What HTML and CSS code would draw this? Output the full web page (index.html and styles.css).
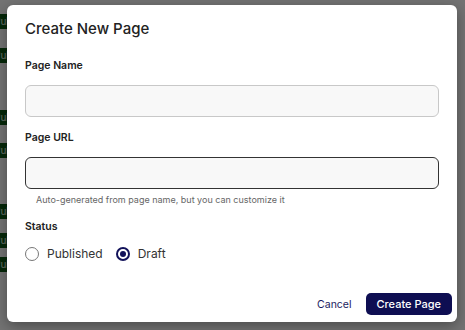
FILE: index.html
```html
<!DOCTYPE html>
<html lang="en">
<head>
    <meta charset="UTF-8">
    <meta name="viewport" content="width=device-width, initial-scale=1.0">
    <title>Create New Page</title>
    <link rel="stylesheet" href="styles.css">
</head>
<body>
    <!-- Page list behind the overlay -->
    <div class="backdrop">
        <span class="badge b1">Published</span>
        <span class="badge b2">Published</span>
        <span class="badge b3">Published</span>
        <span class="badge b4">Published</span>
        <span class="badge b5">Published</span>
        <span class="badge b6">Published</span>
        <span class="badge b7">Published</span>
    </div>
    <div class="overlay">
        <div class="modal">
            <h2 class="modal-title">Create New Page</h2>
            <div class="form-group">
                <label for="pageName">Page Name</label>
                <input type="text" id="pageName" class="field">
            </div>
            <div class="form-group">
                <label for="pageUrl">Page URL</label>
                <input type="text" id="pageUrl" class="field field-focus">
                <p class="hint">Auto-generated from page name, but you can customize it</p>
            </div>
            <div class="form-group">
                <label>Status</label>
                <div class="radios">
                    <span class="radio-option"><span class="radio"></span>Published</span>
                    <span class="radio-option"><span class="radio checked"></span>Draft</span>
                </div>
            </div>
            <div class="actions">
                <button class="btn-cancel">Cancel</button>
                <button class="btn-create">Create Page</button>
            </div>
        </div>
    </div>
</body>
</html>
```

FILE: styles.css
```css
body {
    font-family: Inter, "Noto Sans", sans-serif;
    margin: 0;
    padding: 0;
    width: 465px;
    height: 330px;
    overflow: hidden;
    background-color: #fff;
}
.backdrop {
    position: absolute;
    inset: 0;
}
.badge {
    position: absolute;
    left: -12px;
    height: 15px;
    line-height: 15px;
    padding: 0 6px;
    font-size: 10px;
    color: #e0f5e0;
    background-color: #0d5a16;
}
.b1 { top: 14px; }
.b2 { top: 48px; }
.b3 { top: 110px; }
.b4 { top: 143px; }
.b5 { top: 204px; }
.b6 { top: 233px; }
.b7 { top: 257px; }
.overlay {
    position: absolute;
    inset: 0;
    background-color: rgba(0, 0, 0, 0.55);
    padding: 5px 8px 0 7px;
}
.modal {
    width: 450px;
    height: 317px;
    box-sizing: border-box;
    background-color: #fff;
    border-radius: 6px;
    padding: 14px 18px 0 18px;
    box-shadow: 0 4px 14px rgba(0, 0, 0, 0.35);
    display: flex;
    flex-direction: column;
}
.modal-title {
    margin: 0 0 20px 0;
    font-size: 15px;
    font-weight: 500;
    color: #222;
    line-height: 20px;
}
.form-group {
    margin-bottom: 14px;
}
.form-group label {
    display: block;
    font-size: 10.5px;
    font-weight: 600;
    color: #222;
    line-height: 14px;
    margin-bottom: 12px;
}
.field {
    display: block;
    width: 100%;
    height: 32px;
    box-sizing: border-box;
    border: 1px solid #c8c8c8;
    border-radius: 6px;
    background-color: #f8f8f8;
    outline: none;
}
.field-focus {
    border-color: #333;
}
.hint {
    margin: 5px 0 0 11px;
    font-size: 9px;
    color: #666;
    line-height: 12px;
}
.radios {
    display: flex;
    gap: 13px;
    margin-top: 11px;
}
.radio-option {
    display: flex;
    align-items: center;
    gap: 8px;
    font-size: 12px;
    color: #333;
}
.radio {
    width: 14px;
    height: 14px;
    border: 1.5px solid #777;
    border-radius: 50%;
    box-sizing: border-box;
    display: flex;
    align-items: center;
    justify-content: center;
}
.radio.checked {
    border: 2px solid #12125a;
}
.radio.checked::after {
    content: "";
    width: 6px;
    height: 6px;
    border-radius: 50%;
    background-color: #12125a;
}
.actions {
    margin-top: auto;
    margin-right: -13px;
    margin-bottom: 7px;
    display: flex;
    justify-content: flex-end;
    align-items: center;
    gap: 14px;
}
.btn-cancel {
    background: none;
    border: none;
    font-family: inherit;
    font-size: 10.5px;
    color: #1a1a5e;
    padding: 0;
    cursor: pointer;
}
.btn-create {
    background-color: #0e0e52;
    color: #fff;
    border: none;
    border-radius: 5px;
    font-family: inherit;
    font-size: 11px;
    font-weight: 500;
    padding: 0 11px;
    height: 22px;
    cursor: pointer;
}
```
